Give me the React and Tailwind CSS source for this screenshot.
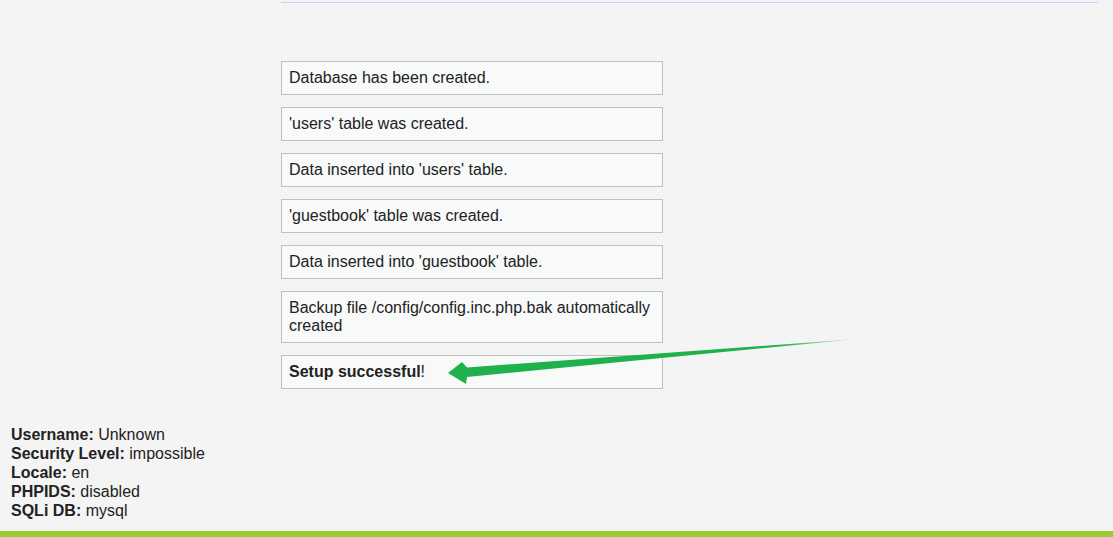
const messages = [
  'Database has been created.',
  "'users' table was created.",
  "Data inserted into 'users' table.",
  "'guestbook' table was created.",
  "Data inserted into 'guestbook' table.",
  'Backup file /config/config.inc.php.bak automatically created',
]

const info = [
  ['Username:', 'Unknown'],
  ['Security Level:', 'impossible'],
  ['Locale:', 'en'],
  ['PHPIDS:', 'disabled'],
  ['SQLi DB:', 'mysql'],
]

function Arrow() {
  return (
    <svg className="absolute left-0 top-0 pointer-events-none" width="1113" height="537">
      <defs>
        <linearGradient id="fade" x1="448" y1="0" x2="858" y2="0" gradientUnits="userSpaceOnUse">
          <stop offset="0" stopColor="#1fb14c" />
          <stop offset="0.8" stopColor="#1fb14c" />
          <stop offset="1" stopColor="#1fb14c" stopOpacity="0.3" />
        </linearGradient>
      </defs>
      <polygon
        points="448,373 462,362 467,367.5 857,339 467,377 466,384"
        fill="url(#fade)"
      />
    </svg>
  )
}

export default function App() {
  return (
    <div className="relative w-[1113px] h-[537px] overflow-hidden bg-[#f4f4f4] text-[#222] font-['Liberation_Sans',Arial,sans-serif] text-[16px] leading-[19px] flex flex-col">
      <div className="ml-[281px] mr-[15px] mt-[2px] border-t border-[#c0d4ff]" />

      <div className="ml-[281px] mt-[58px] w-[382px] flex flex-col gap-[11.5px] leading-[18.4px]">
        {messages.map(m => (
          <div key={m} className="bg-[#f8f9f9] border border-[#c0c0c0] px-[7px] py-[7px]">
            {m}
          </div>
        ))}
        <div className="bg-[#f8f9f9] border border-[#c0c0c0] px-[7px] py-[7px]">
          <em className="not-italic font-bold">Setup successful</em>!
        </div>
      </div>

      <div className="ml-[11px] mt-[36px]">
        {info.map(([k, v]) => (
          <div key={k}>
            <b>{k}</b> {v}
          </div>
        ))}
      </div>

      <div className="flex-1" />
      <div className="h-[6px] bg-[#9c3]" />

      <Arrow />
    </div>
  )
}
